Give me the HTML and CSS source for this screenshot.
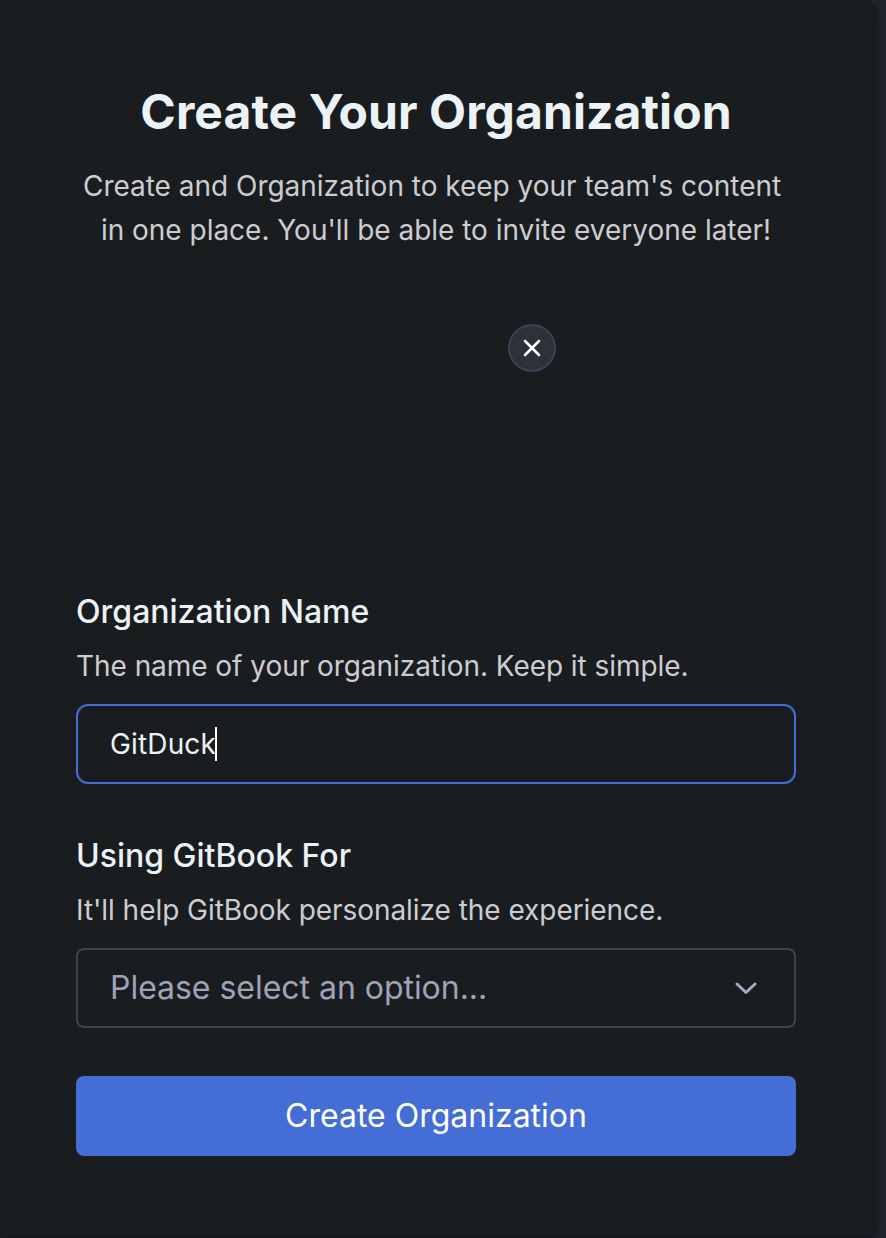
FILE: index.html
```html
<!DOCTYPE html>
<html lang="en">
<head>
<meta charset="utf-8">
<title>Create Your Organization</title>
<link rel="stylesheet" href="styles.css">
</head>
<body>
<main class="card">
  <header class="intro">
    <h1 class="title">Create Your Organization</h1>
    <p class="lead">Create and Organization to keep your team's content&nbsp;<br>in one place. You'll be able to invite everyone later!</p>
  </header>
  <div class="avatar">
    <button class="avatar-clear" type="button" aria-label="Remove image">
      <svg class="icon-x" viewBox="0 0 20 20"><path d="M3 3L17 17M17 3L3 17"/></svg>
    </button>
  </div>
  <section class="field">
    <h2 class="label">Organization Name</h2>
    <p class="hint">The name of your organization. Keep it simple.</p>
    <div class="control control-active"><span class="value">GitDuck</span><span class="caret"></span></div>
  </section>
  <section class="field">
    <h2 class="label">Using GitBook For</h2>
    <p class="hint">It'll help GitBook personalize the experience.</p>
    <div class="control control-select"><span class="placeholder">Please select an option...</span>
      <svg class="icon-chevron" viewBox="0 0 24 14"><path d="M3 3L12 11.5L21 3"/></svg>
    </div>
  </section>
  <button class="submit" type="button">Create Organization</button>
</main>
</body>
</html>
```
FILE: styles.css
```css
* { box-sizing: border-box; margin: 0; padding: 0; }
body {
  height: 1238px;
  overflow: hidden;
  background: #22252f;
  font-family: Inter, "Liberation Sans", sans-serif;
}
.card {
  width: 877px;
  height: 1237px;
  padding: 82px 81px 0 76px;
  background: #1a1d1f;
  border-radius: 0 12px 12px 5px;
  box-shadow: 0 4px 8px rgba(0, 0, 0, 0.45);
}
.intro { text-align: center; white-space: nowrap; }
.title {
  font-size: 48px;
  line-height: 60px;
  font-weight: 700;
  letter-spacing: 0.07px;
  color: #ecf3f6;
}
.lead {
  margin-top: 22px;
  font-size: 28px;
  line-height: 44px;
  letter-spacing: -0.02px;
  color: #cdcdd1;
}
.avatar {
  display: flex;
  justify-content: flex-end;
  width: 192px;
  height: 192px;
  margin: 72px auto 0;
}
.avatar-clear {
  display: grid;
  place-items: center;
  width: 48px;
  height: 48px;
  margin-right: -24px;
  border: 2px solid #3b4253;
  border-radius: 50%;
  background: #2e3138;
}
.icon-x { width: 20px; height: 20px; fill: none; stroke: #fff; stroke-width: 2.5; stroke-linecap: round; }
.field { margin-bottom: 48px; }
.avatar + .field { margin-top: 72px; }
.label {
  font-size: 32px;
  line-height: 48px;
  font-weight: 500;
  color: #ecf3f6;
}
.hint {
  margin-top: 8px;
  font-size: 28px;
  line-height: 44px;
  letter-spacing: -0.05px;
  color: #cdcdd1;
  white-space: nowrap;
}
.control {
  display: flex;
  align-items: center;
  width: 720px;
  height: 80px;
  margin-top: 16px;
  padding: 0 32px;
  border: 2px solid #3b4253;
  border-radius: 8px;
}
.control-active { border-color: #446dd6; border-radius: 12px; }
.value { font-size: 28px; letter-spacing: 0.15px; color: #ecf3f6; }
.caret { width: 2px; height: 34px; margin-left: -1px; background: #fff; }
.control-select { justify-content: space-between; }
.placeholder { font-size: 32px; line-height: 40px; letter-spacing: -0.03px; color: #9fa3b7; }
.icon-chevron { width: 24px; height: 14px; margin-right: 4px; fill: none; stroke: #a9acbf; stroke-width: 3; stroke-linecap: round; stroke-linejoin: round; }
.submit {
  display: block;
  width: 720px;
  height: 80px;
  border: 0;
  border-radius: 8px;
  background: #446dd6;
  color: #fff;
  font: 400 32px/80px Inter, "Liberation Sans", sans-serif;
}
```
